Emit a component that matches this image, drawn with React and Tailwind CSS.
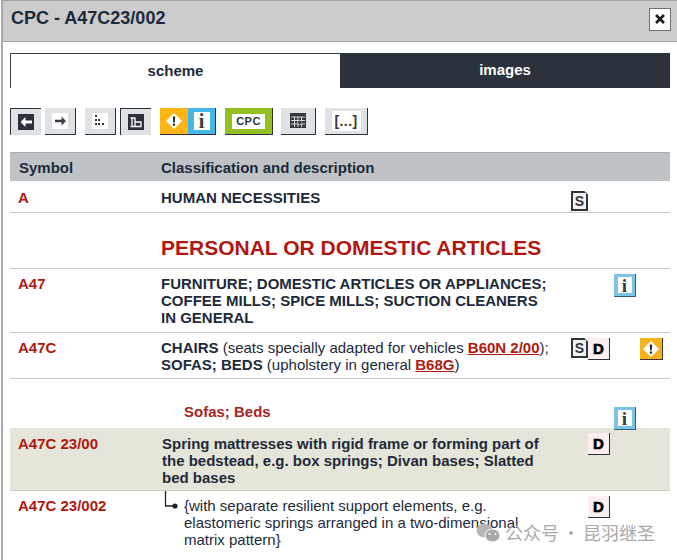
import React from "react";

function BackIcon() {
  return (
    <svg width="16" height="16" viewBox="0 0 16 16">
      <rect width="16" height="16" fill="#2b323c" />
      <path d="M2.5 8l5-5v3.4H14v3.2H7.5V13z" fill="#fff" />
    </svg>
  );
}
function ForwardIcon() {
  return (
    <svg width="16" height="16" viewBox="0 0 16 16">
      <rect width="16" height="16" fill="#fff" />
      <path d="M14 8l-4.5-4.5V6.8H3v2.4h6.5v3.3z" fill="#3a3f45" />
    </svg>
  );
}
function DotsIcon() {
  return (
    <svg width="16" height="16" viewBox="0 0 16 16">
      <rect width="16" height="16" fill="#fff" />
      <path d="M3 2h2v2H3zM3 6h2v2H3zM6 6h2v2H6zM3 10h2v2H3zM6 10h2v2H6zM10 10h2v2h-2z" fill="#2f353d" />
    </svg>
  );
}
function TreeIcon() {
  return (
    <svg width="16" height="16" viewBox="0 0 16 16">
      <rect width="16" height="16" fill="#2b323c" />
      <path d="M2.5 4h5M7 4v8.5M7 8h6.5M2.5 12.5h11M13 8v4.5M4 4v8.5" stroke="#fff" strokeWidth="1.3" fill="none" />
    </svg>
  );
}
function TableIcon() {
  return (
    <svg width="16" height="16" viewBox="0 0 16 16">
      <rect width="16" height="15" fill="#33383f" />
      <path d="M1 4h14M1 7.5h14M1 11h14M4.5 4v10M8 4v10M11.5 4v10" stroke="#d9dbdd" strokeWidth="1" />
      <rect x="8.5" y="7.8" width="3" height="3" fill="#33383f" />
    </svg>
  );
}
function Btn({ active, w, children }) {
  return (
    <div
      className={
        active
          ? "h-[27px] bg-[#dfe2e5] border-t border-l border-[#2b323c] flex items-center justify-center"
          : "h-[27px] bg-[#dfe2e5] border-b border-r border-[#2b323c] flex items-center justify-center"
      }
      style={{ width: w }}
    >
      {children}
    </div>
  );
}
function WarnGlyph() {
  return (
    <svg width="18" height="18" viewBox="0 0 18 18">
      <path d="M9 1l8 8-8 8-8-8z" fill="#fff" />
      <path d="M7.8 4.5h2.4l-.4 6H8.2zM7.9 11.6h2.2v2.2H7.9z" fill="#2b2b2b" />
    </svg>
  );
}
function InfoGlyph({ size = 16, text = "text-[20px]" }) {
  return (
    <span
      className={"bg-white flex items-center justify-center font-bold text-[#333a42] font-['Liberation_Serif',serif] leading-none " + text}
      style={{ width: size, height: size + 2 }}
    >
      i
    </span>
  );
}
function SIcon() {
  return (
    <div className="ml-px w-[17px] h-[20px] bg-[#2f353c] flex items-center justify-center [clip-path:polygon(0_0,78%_0,100%_18%,100%_100%,0_100%)]">
      <span className="w-[13px] h-[16px] bg-[#f2f2f2] flex items-center justify-center text-[14px] font-bold text-[#30353b] leading-none">S</span>
    </div>
  );
}
function DIcon() {
  return (
    <div className="w-[22px] h-[22px] bg-[#fbeeee] border-r border-b border-[#2b323c] flex items-center justify-center text-[15px] font-bold text-black leading-none [-webkit-text-stroke:0.6px_black]">
      D
    </div>
  );
}
function IIcon() {
  return (
    <div className="w-[22px] h-[23px] bg-[#7cc3e6] border-r border-b border-[#2f5f80] flex items-center justify-center">
      <InfoGlyph size={14} text="text-[19px]" />
    </div>
  );
}
function WIcon() {
  return (
    <div className="w-[23px] h-[22px] bg-[#f7b21b] border-r border-b border-[#3b3a32] flex items-center justify-center">
      <WarnGlyph />
    </div>
  );
}

function Row({ symbol, bg, h, border = true, pt = "pt-[7px]", iconTop = "mt-[5px]", s, d, i, w, children }) {
  return (
    <div
      className={
        "flex " +
        (border ? "border-b border-[#c9cbcd] " : "") +
        (bg ? "bg-[#e6e5d9]" : "")
      }
      style={{ height: h }}
    >
      <div className={"w-[151px] shrink-0 pl-2 font-bold text-[15px] leading-[17px] text-[#b0170f] " + pt}>{symbol}</div>
      <div className={"w-[409px] shrink-0 text-[15px] leading-[17px] text-[#1e2a3a] whitespace-nowrap " + pt}>{children}</div>
      <div className={"w-[18px] shrink-0 " + iconTop}>{s && <SIcon />}</div>
      <div className={"w-[22px] shrink-0 " + iconTop}>{d && <DIcon />}</div>
      <div className={"w-[22px] shrink-0 ml-1 " + iconTop}>{i && <IIcon />}</div>
      <div className={"w-[23px] shrink-0 ml-1 " + iconTop}>{w && <WIcon />}</div>
    </div>
  );
}

function RefLink({ children }) {
  return <span className="font-bold text-[#b0170f] underline">{children}</span>;
}

export default function App() {
  return (
    <div className="relative h-[560px] w-[677px] overflow-hidden bg-white border-l-2 border-[#a9a9a9] font-['Liberation_Sans',sans-serif] ml-[1px]">
      <div className="h-[42px] -ml-[3px] bg-[#cccccc] border-t border-b border-[#a3a3a3] flex items-center justify-between pl-[11px] pr-[7px] pb-[4px]">
        <span className="text-[18px] font-bold text-[#1b2a3c] leading-[22px] -mt-[2px]">CPC - A47C23/002</span>
        <div className="w-[22px] h-[23px] bg-white border border-[#6f6f6f] flex items-center justify-center">
          <svg width="12" height="12" viewBox="0 0 12 12">
            <path d="M2 2l8 8M10 2l-8 8" stroke="#1d1d1d" strokeWidth="2.6" />
          </svg>
        </div>
      </div>

      <div className="ml-[7px] w-[660px]">
        <div className="flex mt-[11px] h-[35px]">
          <div className="w-[330px] bg-white border-t border-l border-[#3a3f47] flex items-center justify-center text-[15px] font-bold text-[#1e2a3a]">
            scheme
          </div>
          <div className="w-[330px] bg-[#2b323c] flex items-center justify-center text-[15px] font-bold text-white">
            images
          </div>
        </div>

        <div className="flex mt-[20px] h-[27px]">
          <Btn active w={31}><BackIcon /></Btn>
          <div className="ml-1"><Btn w={31}><ForwardIcon /></Btn></div>
          <div className="ml-[9px]"><Btn w={31}><DotsIcon /></Btn></div>
          <div className="ml-1"><Btn active w={31}><TreeIcon /></Btn></div>
          <div className="ml-[9px] flex w-[56px] h-[27px] border-b border-r border-[#2b323c]">
            <div className="w-[28px] bg-[#fdb515] flex items-center justify-center"><WarnGlyph /></div>
            <div className="flex-1 bg-[#45b8e6] flex items-center justify-center"><InfoGlyph /></div>
          </div>
          <div className="ml-[9px] w-[48px] h-[27px] bg-[#93c01f] border-b border-r border-[#2b323c] flex items-center justify-center">
            <span className="w-[33px] h-[15px] bg-white flex items-center justify-center text-[11px] font-bold text-[#2b323c] tracking-[0.5px] leading-none">CPC</span>
          </div>
          <div className="ml-2"><Btn w={35}><TableIcon /></Btn></div>
          <div className="ml-[9px]">
            <Btn w={43}>
              <span className="bg-white px-[3px] h-[20px] flex items-center font-bold text-[14px] text-[#33383f] tracking-[0.4px]">[...]</span>
            </Btn>
          </div>
        </div>

        <div className="flex items-center mt-[17px] h-[29px] pt-[3px] bg-[#bfc3c6] border-t border-[#a9adb0] font-bold text-[15px] text-[#1b2a3c]">
          <div className="w-[151px] pl-[9px]">Symbol</div>
          <div>Classification and description</div>
        </div>

        <Row symbol="A" h={32} pt="pt-[8px]" iconTop="mt-[10px]" s>
          <span className="font-bold">HUMAN NECESSITIES</span>
        </Row>

        <div className="h-[56px] border-b border-[#c9cbcd] pl-[151px] pt-[23px] text-[21px] leading-[24px] font-bold text-[#b0170f]">
          PERSONAL OR DOMESTIC ARTICLES
        </div>

        <Row symbol="A47" h={64} pt="pt-[6px]" iconTop="mt-[5px]" i>
          <span className="font-bold">FURNITURE; DOMESTIC ARTICLES OR APPLIANCES;<br />COFFEE MILLS; SPICE MILLS; SUCTION CLEANERS<br />IN GENERAL</span>
        </Row>

        <Row symbol="A47C" h={46} pt="pt-[6px]" iconTop="mt-[5px]" s d w>
          <span className="font-bold">CHAIRS</span> (seats specially adapted for vehicles <RefLink>B60N 2/00</RefLink>);<br />
          <span className="font-bold">SOFAS; BEDS</span> (upholstery in general <RefLink>B68G</RefLink>)
        </Row>

        <Row symbol="" h={49} border={false} pt="pt-[24px]" iconTop="mt-[28px]" i>
          <div className="pl-[23px] font-bold text-[#a8251f]">Sofas; Beds</div>
        </Row>

        <Row symbol="A47C 23/00" bg h={63} pt="pt-[7px]" iconTop="mt-[5px]" d>
          <div className="pl-px font-bold">Spring mattresses with rigid frame or forming part of<br />the bedstead, e.g. box springs; Divan bases; Slatted<br />bed bases</div>
        </Row>

        <Row symbol="A47C 23/002" h={69} border={false} pt="pt-[6px]" iconTop="mt-[5px]" d>
          <div className="flex">
            <svg width="23" height="20" viewBox="0 0 23 20" className="shrink-0 -mt-[6px]">
              <path d="M4.5 0v15H12" stroke="#1d232b" strokeWidth="1.3" fill="none" />
              <circle cx="14" cy="15" r="2.6" fill="#1d232b" />
            </svg>
            <div>{"{with separate resilient support elements, e.g."}<br />elastomeric springs arranged in a two-dimensional<br />{"matrix pattern}"}</div>
          </div>
        </Row>
      </div>

      <div className="absolute left-[472px] top-[519px] flex items-center gap-[4px] text-[#a9a9a9] text-[18px] font-['Noto_Sans_CJK_SC',sans-serif]">
        <svg width="26" height="22" viewBox="0 0 26 22">
          <ellipse cx="9.5" cy="8.5" rx="8" ry="7" fill="#b5b5b5" />
          <ellipse cx="17.5" cy="13.5" rx="7.5" ry="6.5" fill="#a8a8a8" stroke="#fff" strokeWidth="1" />
          <circle cx="14.5" cy="12" r="1" fill="#fff" />
          <circle cx="20.5" cy="12" r="1" fill="#fff" />
        </svg>
        <span className="flex gap-[3px]"><span>公众号</span><span>·</span><span>昆羽继圣</span></span>
      </div>
    </div>
  );
}
